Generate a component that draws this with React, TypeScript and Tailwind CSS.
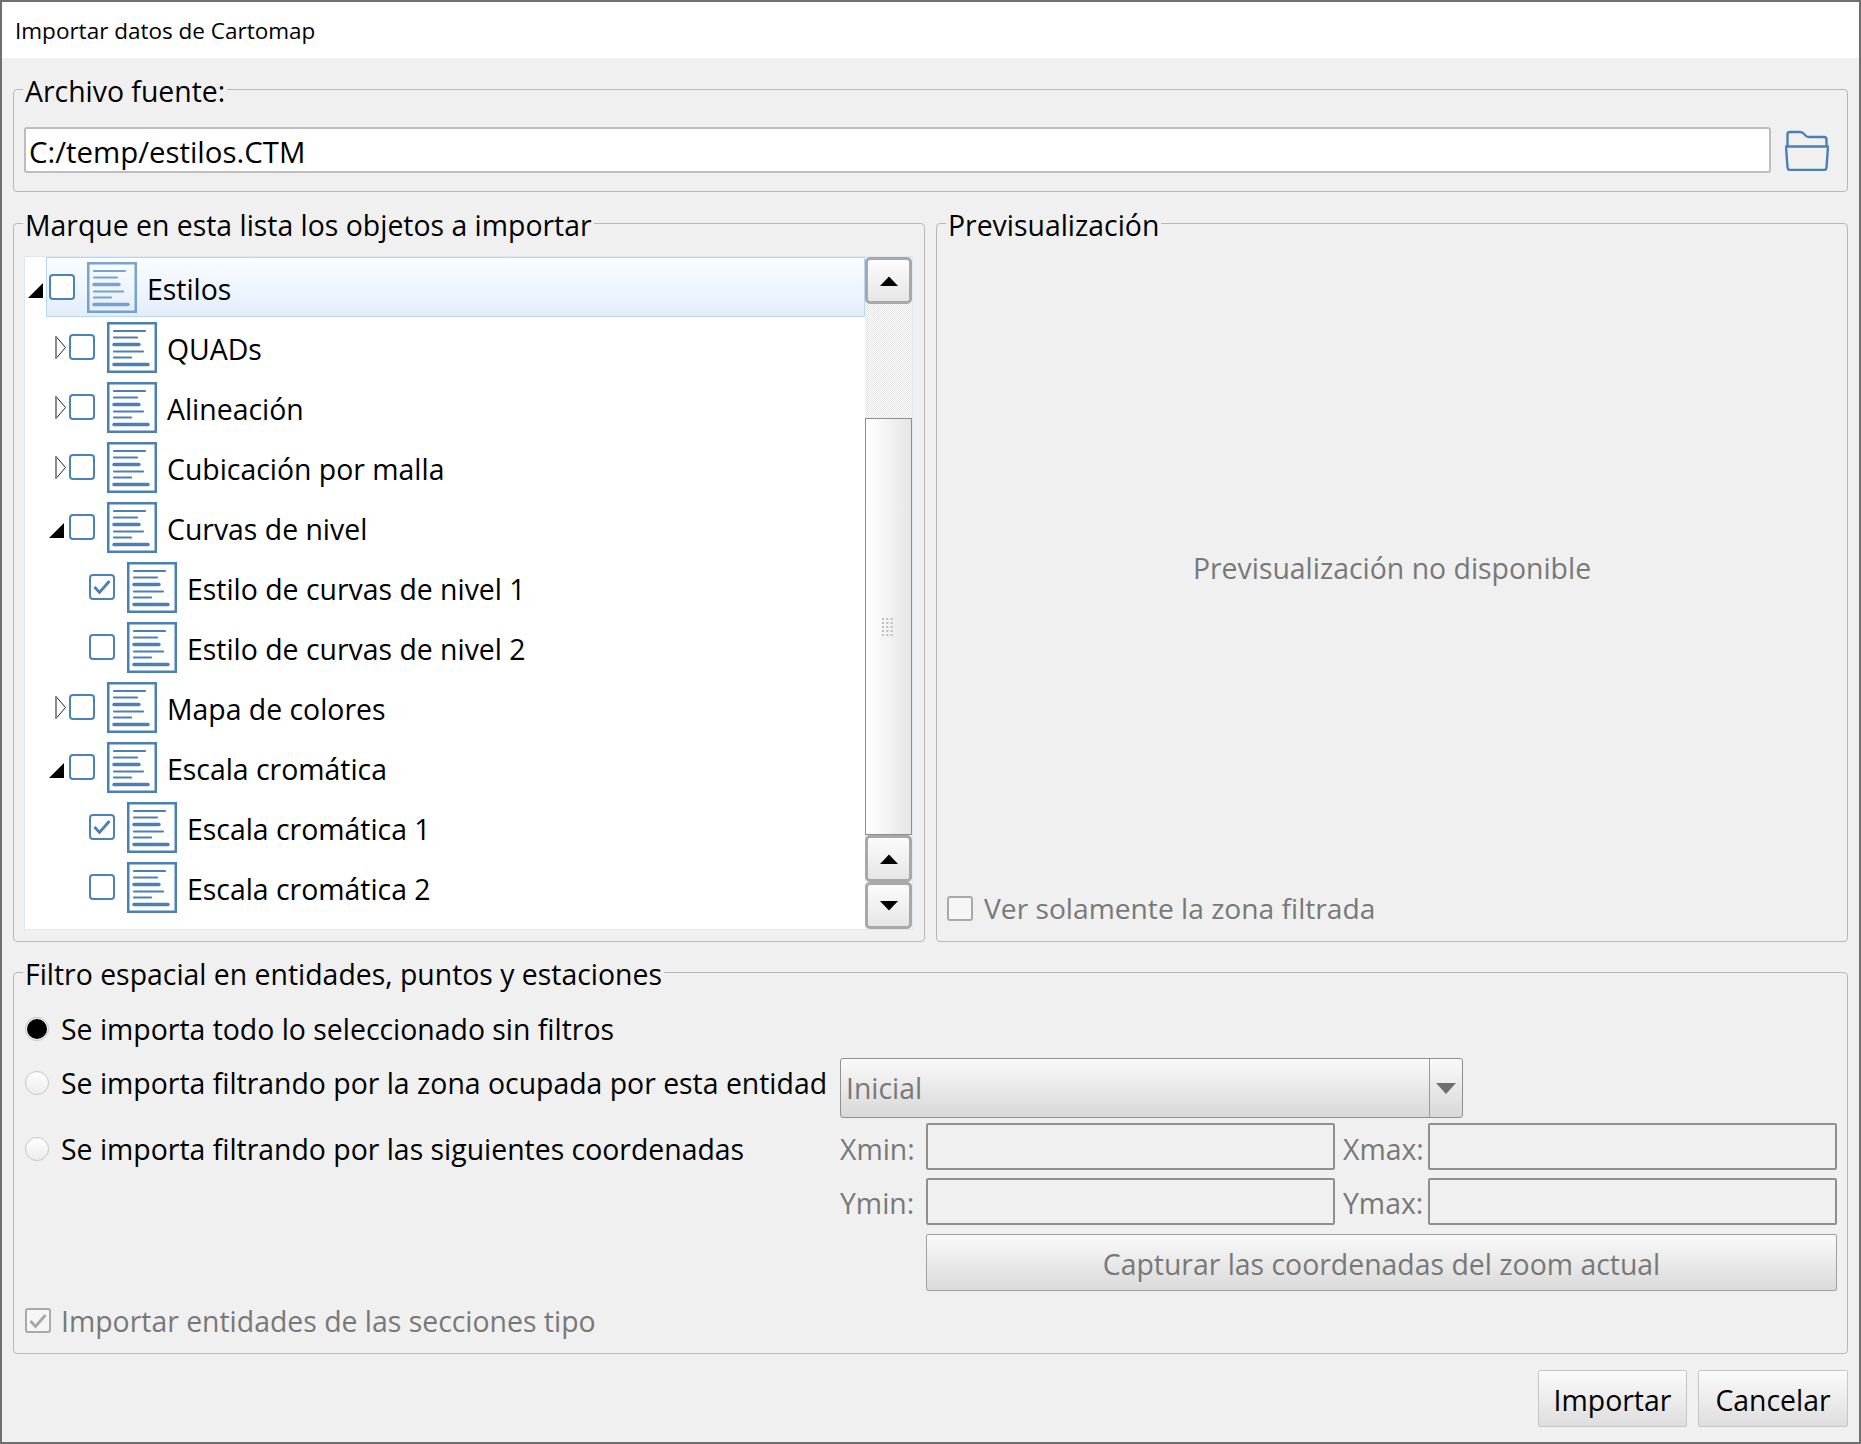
import type { ReactNode } from "react";

const FONT = "font-['Open_Sans','Noto_Sans',sans-serif]";

const TREE_ROWS = [
  { label: "Estilos", level: 0, toggle: "open", selected: true },
  { label: "QUADs", level: 1, toggle: "closed" },
  { label: "Alineación", level: 1, toggle: "closed" },
  { label: "Cubicación por malla", level: 1, toggle: "closed" },
  { label: "Curvas de nivel", level: 1, toggle: "open" },
  { label: "Estilo de curvas de nivel 1", level: 2, checked: true },
  { label: "Estilo de curvas de nivel 2", level: 2 },
  { label: "Mapa de colores", level: 1, toggle: "closed" },
  { label: "Escala cromática", level: 1, toggle: "open" },
  { label: "Escala cromática 1", level: 2, checked: true },
  { label: "Escala cromática 2", level: 2 },
];

const SLOT_WIDTH = ["w-[21px]", "w-[41px]", "w-[61px]"];

const GRIP_DOTS = [0, 1, 2].flatMap((col) => [0, 1, 2, 3, 4].map((row) => ({ col, row })));

function StyleIcon({ faded }: { faded?: boolean }) {
  return (
    <svg width="50" height="51" viewBox="0 0 50 51" className={faded ? "opacity-70 shrink-0" : "shrink-0"}>
      <rect x="1.250" y="1.250" width="47.500" height="48.500" fill="none" stroke="#4a7fb8" strokeWidth="2.500" />
      <g stroke="#4a7fb8" strokeLinecap="round">
        <path d="M7 9H38" strokeWidth="2.200" />
        <path d="M7 15.500H30" strokeWidth="2.200" />
        <path d="M7 22.500H32" strokeWidth="3.400" />
        <path d="M7 29.500H36" strokeWidth="2.200" />
        <path d="M7 35.500H24" strokeWidth="2.200" />
        <path d="M7 42.500H41" strokeWidth="3.400" />
      </g>
    </svg>
  );
}

function Toggle({ kind, level }: { kind?: string; level: number }) {
  if (kind === "open") {
    return (
      <svg width="15" height="15" viewBox="0 0 15 15" className={level === 0 ? "mr-[3px] mt-[6px] shrink-0" : "mr-[2px] mt-[6px] shrink-0"}>
        <path d="M15 0V15H0Z" fill="#000" />
      </svg>
    );
  }
  if (kind === "closed") {
    return (
      <svg width="11" height="25" viewBox="0 0 11 25" className="shrink-0">
        <path d="M10.500 12.500L1 1.500" fill="none" stroke="#222" strokeWidth="1" />
        <path d="M10.500 12.500L1 23.500" fill="none" stroke="#222" strokeWidth="1" />
        <path d="M1 1V24" fill="none" stroke="#8a8a8a" strokeWidth="2" />
      </svg>
    );
  }
  return null;
}

function Check({ checked, disabled }: { checked?: boolean; disabled?: boolean }) {
  return (
    <span
      className={
        disabled
          ? "flex h-[25px] w-[26px] shrink-0 items-center justify-center rounded-[3px] border-2 border-[#a9a9a9] bg-[#f6f6f6]"
          : "flex h-[26px] w-[26px] shrink-0 items-center justify-center rounded-[4px] border-2 border-[#4a82bb] bg-white"
      }
    >
      {checked && (
        <svg width="18" height="16" viewBox="0 0 18 16">
          <path
            d="M1.500 8L6.500 13.500L16.500 2"
            fill="none"
            stroke={disabled ? "#a5a5a5" : "#4a7fb8"}
            strokeWidth="2.800"
          />
        </svg>
      )}
    </span>
  );
}

function TreeRow({ row }: { row: (typeof TREE_ROWS)[number] }) {
  return (
    <div className="flex h-[60px] w-full items-center">
      <div className={`flex h-[60px] shrink-0 items-center justify-end ${SLOT_WIDTH[row.level]}`}>
        <Toggle kind={row.toggle} level={row.level} />
      </div>
      <div
        className={
          row.selected
            ? "flex h-[60px] flex-1 items-center border border-[#b9d7f5] bg-gradient-to-b from-[#fbfdff] to-[#e2eefc] pl-[2px]"
            : "flex h-[60px] flex-1 items-center pl-[3px]"
        }
      >
        <Check checked={row.checked} />
        <span className="ml-[12px]">
          <StyleIcon faded={row.selected} />
        </span>
        <span className="ml-[10px] pt-[5px] text-[28.400px] text-black">{row.label}</span>
      </div>
    </div>
  );
}

function ScrollButton({ dir }: { dir: "up" | "down" }) {
  return (
    <div className="flex h-[47px] shrink-0 items-center justify-center rounded-[5px] border-[3px] border-[#a8a8a8] bg-gradient-to-b from-[#fcfcfc] to-[#e6e6e6]">
      <svg width="18" height="10" viewBox="0 0 18 10">
        <path d={dir === "up" ? "M9 0.500L18 10H0Z" : "M0 0H18L9 9.500Z"} fill="#000" />
      </svg>
    </div>
  );
}

function Scrollbar() {
  return (
    <div className="flex w-[47px] shrink-0 flex-col">
      <ScrollButton dir="up" />
      <div className="h-[114px] bg-[#f1f1f1] bg-[repeating-conic-gradient(#e6e6e6_0%_25%,#fbfbfb_0%_50%)] bg-[length:2px_2px]" />
      <div className="flex flex-1 items-center justify-center border border-[#8e8e8e] bg-gradient-to-r from-white to-[#e6e6e6]">
        <svg width="13" height="18" viewBox="0 0 13 18">
          {GRIP_DOTS.map((dot) => (
            <rect key={`${dot.col}-${dot.row}`} x={dot.col * 4.3} y={dot.row * 4} width="2" height="2" fill="#bdbdbd" />
          ))}
        </svg>
      </div>
      <ScrollButton dir="up" />
      <ScrollButton dir="down" />
    </div>
  );
}

function Group({ title, className, children }: { title: string; className: string; children: ReactNode }) {
  return (
    <fieldset className={`rounded-[4px] border border-[#b8b8b8] ${className}`}>
      <legend className="ml-[9px] translate-y-[2px] px-[2px] text-[28.400px] leading-[36px] text-black">{title}</legend>
      {children}
    </fieldset>
  );
}

function Radio({ on, label }: { on?: boolean; label: string }) {
  return (
    <div className="flex items-center">
      <span
        className={
          on
            ? "h-[24px] w-[24px] shrink-0 rounded-full border border-[#c6c6c6] bg-black bg-clip-content p-[1px]"
            : "h-[24px] w-[24px] shrink-0 rounded-full border border-[#c6c6c6] bg-gradient-to-b from-white to-[#ececec]"
        }
      />
      <span className="ml-[12px] text-[28.400px] text-black">{label}</span>
    </div>
  );
}

function FieldLabel({ text, className }: { text: string; className: string }) {
  return <span className={`text-[28.400px] text-[#787878] ${className}`}>{text}</span>;
}

function CoordField() {
  return <div className="h-[47px] rounded-[2px] border-2 border-[#8f8f8f] bg-[#f0f0f0]" />;
}

function PushButton({ label, width }: { label: string; width: string }) {
  return (
    <button
      type="button"
      className={`h-[57px] rounded-[2px] border border-[#c6c6c6] bg-gradient-to-b from-[#fbfbfb] to-[#dedede] pt-[3px] text-[28.400px] text-black ${width}`}
    >
      {label}
    </button>
  );
}

export default function App() {
  return (
    <div className={`${FONT} flex h-[1444px] w-[1861px] flex-col border-2 border-[#6f6f6f] bg-[#f0f0f0]`}>
      <div className="flex h-[56px] shrink-0 items-center bg-white pl-[13px] pt-[2px] text-[22.500px] text-black">
        Importar datos de Cartomap
      </div>

      <div className="flex flex-1 flex-col px-[11px] pt-[13px]">
        <Group title="Archivo fuente:" className="h-[121px] shrink-0">
          <div className="flex items-start pl-[10px] pt-[20px]">
            <div className="flex h-[46px] w-[1747px] items-center rounded-[3px] border-2 border-[#bdbdbd] bg-white pl-[3px] pt-[5px] text-[29.400px] text-black">
              C:/temp/estilos.CTM
            </div>
            <svg width="44" height="41" viewBox="0 0 44 41" className="ml-[14px] mt-[3px]">
              <path
                d="M2.500 16V4Q2.500 2 5 2H15Q17 2 18.500 3.500L21 6Q22 7 24 7H39Q41.500 7 41.500 9.500V16"
                fill="none"
                stroke="#4a7fb8"
                strokeWidth="2.400"
              />
              <path
                d="M1 16.500H43L41.500 37.500Q41.300 40 39 40H5Q2.700 40 2.500 37.500Z"
                fill="none"
                stroke="#4a7fb8"
                strokeWidth="2.400"
                strokeLinejoin="round"
              />
            </svg>
          </div>
        </Group>

        <div className="mt-[13px] flex h-[737px] shrink-0 gap-[11px]">
          <Group title="Marque en esta lista los objetos a importar" className="w-[912px] shrink-0">
            <div className="mt-[15px] flex h-[674px] pl-[10px]">
              <div className="flex w-[889px] border border-[#dbe8f8]">
                <div className="w-[840px] shrink-0 overflow-hidden bg-white">
                  {TREE_ROWS.map((row) => (
                    <TreeRow key={row.label} row={row} />
                  ))}
                </div>
                <Scrollbar />
              </div>
            </div>
          </Group>

          <Group title="Previsualización" className="flex flex-1 flex-col">
            <div className="flex h-[700px] flex-col pb-[15px] pl-[10px]">
              <div className="flex flex-1 items-center justify-center pr-[10px] pt-[6px] text-[28.400px] text-[#787878]">
                Previsualización no disponible
              </div>
              <div className="flex h-[36px] items-center">
                <Check disabled />
                <span className="ml-[11px] text-[28.200px] text-[#787878]">Ver solamente la zona filtrada</span>
              </div>
            </div>
          </Group>
        </div>

        <Group title="Filtro espacial en entidades, puntos y estaciones" className="mt-[12px] h-[400px] shrink-0">
          <div className="flex flex-col pl-[11px] pt-[16px]">
            <div className="flex h-[46px] items-center">
              <Radio on label="Se importa todo lo seleccionado sin filtros" />
            </div>

            <div className="mt-[6px] flex h-[60px]">
              <div className="mt-[4px] w-[815px] shrink-0">
                <Radio label="Se importa filtrando por la zona ocupada por esta entidad" />
              </div>
              <div className="flex h-[60px] w-[623px] rounded-[3px] border border-[#8f8f8f] bg-gradient-to-b from-[#fafafa] to-[#d8d8d8]">
                <span className="flex flex-1 items-center pl-[5px] pt-[1px] text-[28.400px] text-[#787878]">Inicial</span>
                <span className="flex w-[33px] items-center justify-center border-l border-[#9a9a9a]">
                  <svg width="20" height="11" viewBox="0 0 20 11">
                    <path d="M0 0H20L10 11Z" fill="#6e6e6e" />
                  </svg>
                </span>
              </div>
            </div>

            <div className="mt-[5px] flex h-[47px] items-center">
              <div className="w-[815px] shrink-0 pt-[5px]">
                <Radio label="Se importa filtrando por las siguientes coordenadas" />
              </div>
              <FieldLabel text="Xmin:" className="w-[86px] shrink-0 pt-[5px]" />
              <div className="w-[409px] shrink-0">
                <CoordField />
              </div>
              <FieldLabel text="Xmax:" className="w-[93px] shrink-0 pl-[8px] pt-[5px]" />
              <div className="w-[409px] shrink-0">
                <CoordField />
              </div>
            </div>

            <div className="mt-[8px] flex h-[47px] items-center pl-[815px]">
              <FieldLabel text="Ymin:" className="w-[86px] shrink-0 pt-[4px]" />
              <div className="w-[409px] shrink-0">
                <CoordField />
              </div>
              <FieldLabel text="Ymax:" className="w-[93px] shrink-0 pl-[8px] pt-[4px]" />
              <div className="w-[409px] shrink-0">
                <CoordField />
              </div>
            </div>

            <div className="mt-[9px] pl-[901px]">
              <div className="flex h-[57px] w-[911px] items-center justify-center rounded-[2px] border border-[#a0a0a0] bg-gradient-to-b from-[#fafafa] to-[#dadada] pt-[3px] text-[28.400px] text-[#787878]">
                Capturar las coordenadas del zoom actual
              </div>
            </div>

            <div className="mt-[17px] flex h-[25px] items-center">
              <Check checked disabled />
              <span className="ml-[10px] pt-[2px] text-[28.400px] text-[#787878]">Importar entidades de las secciones tipo</span>
            </div>
          </div>
        </Group>

        <div className="mt-[16px] flex justify-end gap-[11px]">
          <PushButton label="Importar" width="w-[149px]" />
          <PushButton label="Cancelar" width="w-[150px]" />
        </div>
      </div>
    </div>
  );
}
